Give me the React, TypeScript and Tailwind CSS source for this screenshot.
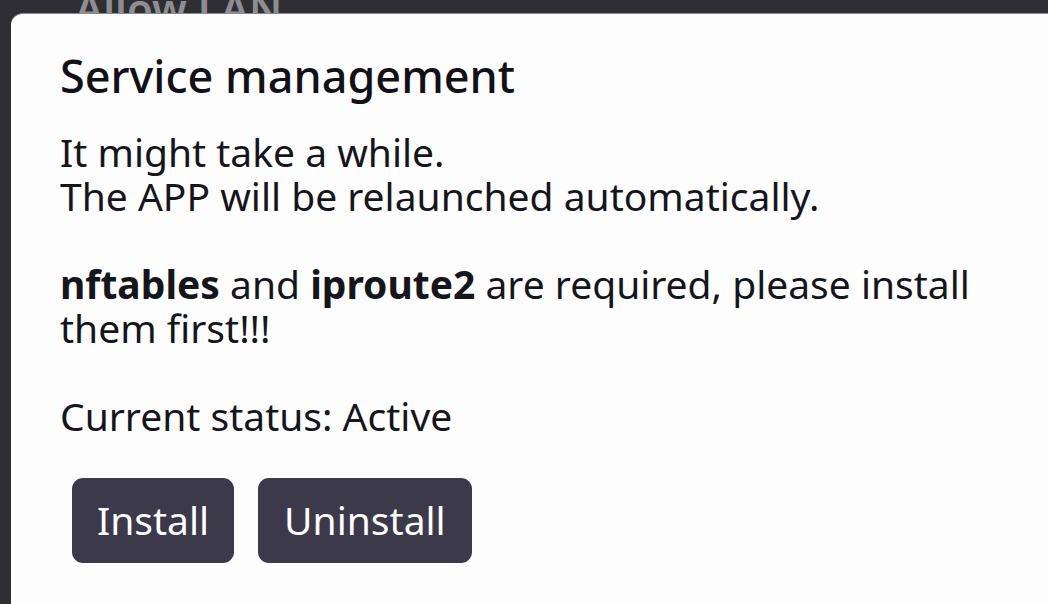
import React from 'react';

const font = { fontFamily: '"Noto Sans", "DejaVu Sans", sans-serif' };

export default function App() {
  return (
    <div className="w-[1048px] h-[604px] overflow-hidden bg-[#2e2e33] relative" style={font}>
      {/* text of the page behind the dialog */}
      <div className="absolute left-[75px] top-[-24px] text-[42px] font-semibold text-[#8d8d92]">Allow LAN</div>

      <div className="absolute left-[11px] top-[13px] w-[1100px] h-[640px] bg-[#fdfdfd] rounded-tl-[12px] border-t border-[#8a8a8a] pl-[49px] pt-[34px]">
        <h2 className="text-[45px] leading-[56px] font-medium text-[#111116]">Service management</h2>
        <div className="mt-[26px] text-[39px] leading-[44px] text-[#15151c]">
          <p>It might take a while.</p>
          <p>The APP will be relaunched automatically.</p>
          <p>&nbsp;</p>
          <p>
            <b className="font-bold">nftables</b> and <b className="font-bold">iproute2</b> are required, please install
            <br />
            them first!!!
          </p>
          <p>&nbsp;</p>
          <p>Current status: Active</p>
        </div>
        <div className="flex gap-[24px] mt-[40px] ml-[12px]">
          <button className="h-[85px] px-[25px] rounded-[11px] bg-[#3c3a4a] text-white text-[39px]">Install</button>
          <button className="h-[85px] px-[26px] rounded-[11px] bg-[#3c3a4a] text-white text-[39px]">Uninstall</button>
        </div>
      </div>
    </div>
  );
}
